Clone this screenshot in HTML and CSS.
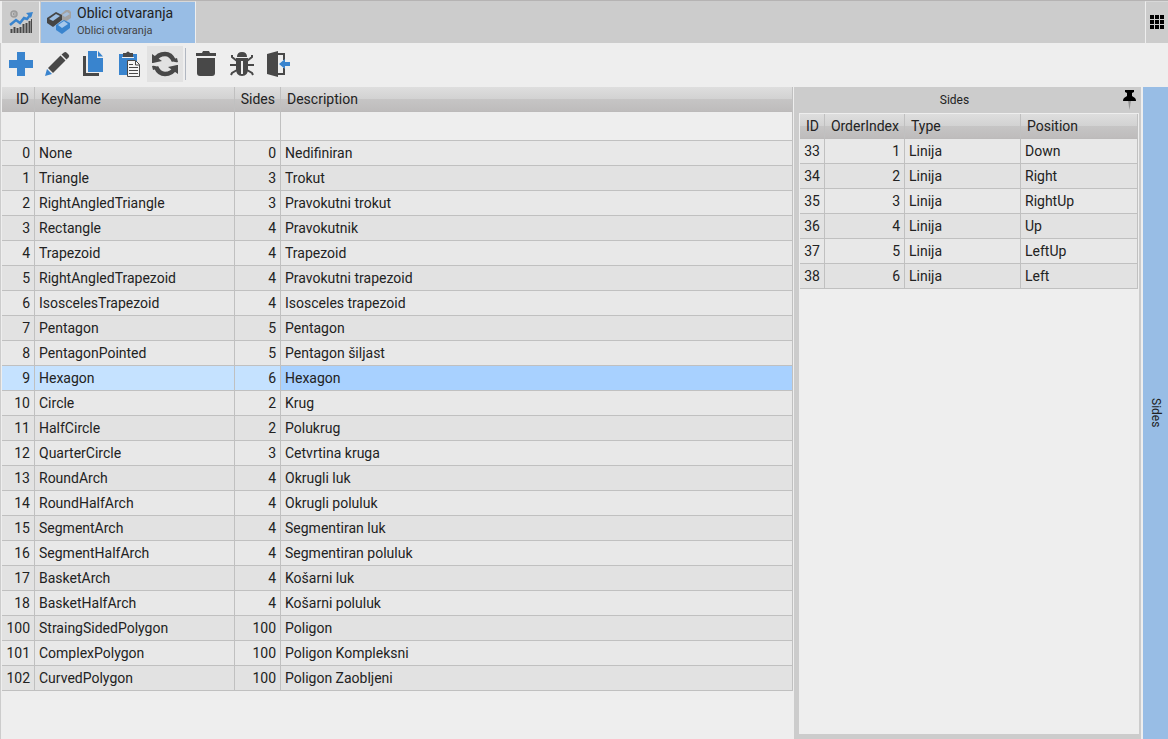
FILE: index.html
```html
<!DOCTYPE html>
<html lang="hr">
<head>
<meta charset="utf-8">
<title>Oblici otvaranja</title>
<link rel="stylesheet" href="styles.css">
</head>
<body>
<div class="app">
  <header class="tabs">
    <button class="tab-home" aria-label="Početna">
      <svg width="24" height="24" viewBox="0 0 24 24"><circle cx="5" cy="4" r="3" fill="#c4c4c4" stroke="#9a9a9a" stroke-width="1.500"/><path d="M7 3H4.500v2H7" fill="none" stroke="#999"/><path d="M2.500 19v4M5.500 17v6M8.500 18v5M11.500 17v6M14.500 14v9M17.500 13v10M20.500 11v12" stroke="#484848" stroke-width="2"/><path d="M22 9h1v14h-1z" fill="#484848"/><path d="M1 15l6-5 4 3 4-5 3 1 4-5" fill="none" stroke="#3984ce" stroke-width="2.500"/><path d="M17 3l7-1-2 6z" fill="#3984ce"/></svg>
    </button>
    <button class="tab-active">
      <svg width="24" height="24" viewBox="0 0 24 24"><path d="M14 4l5-4h3l2 2v6l-6 4-4-3z" fill="#a2a2a2"/><path d="M15 5l5-3 3 2-5 3z" fill="#a5bedb"/><path d="M0 8l9-6 6 3v5l-9 7-6-4z" fill="#454545"/><path d="M2 9l7-5 4 2-7 5z" fill="#9bbde2"/><path d="M9 15l8-5 6 3v5l-8 6-6-4z" fill="#3984ce"/><path d="M11 15l6-4 4 3-6 4z" fill="#a5c8ec"/></svg>
      <span class="tab-text"><span class="tab-title">Oblici otvaranja</span><span class="tab-sub">Oblici otvaranja</span></span>
    </button>
    <button class="apps" aria-label="Aplikacije">
      <svg width="14" height="14" viewBox="0 0 14 14"><path d="M0 0h4v4H0zM5 0h4v4H5zM10 0h4v4h-4zM0 5h4v4H0zM5 5h4v4H5zM10 5h4v4h-4zM0 10h4v4H0zM5 10h4v4H5zM10 10h4v4h-4z"/></svg>
    </button>
  </header>

  <div class="toolbar" role="toolbar" aria-label="Alati">
    <button aria-label="Dodaj"><svg width="26" height="26" viewBox="0 0 26 26"><path d="M9 1h8v8h8v8h-8v8H9v-8H1V9h8z" fill="#3984ce"/></svg></button>
    <button aria-label="Uredi"><svg width="26" height="26" viewBox="0 0 26 26"><path d="M20 1.500q1.500-1 3 .5l1.500 1.500q1.500 1.500 0 3l-2 2-5-5z" fill="#484848"/><path d="M16.500 4.500l5 5L9 22l-5-5z" fill="#484848"/><path d="M3 18l5 5-7 2z" fill="#3984ce"/></svg></button>
    <button aria-label="Kopiraj"><svg width="26" height="26" viewBox="0 0 26 26"><path d="M3 5h3v17h13v3H3z" fill="#484848"/><path d="M8 0h9v7h6v14H8z" fill="#3984ce"/><path d="M18 0l5 5.500h-5z" fill="#3984ce"/></svg></button>
    <button aria-label="Zalijepi"><svg width="26" height="26" viewBox="0 0 26 26"><path d="M3 3h18v21H3z" fill="#3984ce"/><path d="M7 2h3q2-3 4 0h3v4H7z" fill="#484848"/><path d="M6 6h12v1H6z" fill="#eee"/><path d="M11.500 9.500h8l4 4v12h-12z" fill="#f4f4f4" stroke="#484848"/><path d="M19.500 10v4h4M13 13.500h4M13 16.500h9M13 19.500h9M13 22.500h9" fill="none" stroke="#484848"/></svg></button>
    <button class="pressed" aria-label="Osvježi"><svg width="26" height="26" viewBox="0 0 26 26"><path d="M3 9Q6 3 13 3q6 0 9 7M23 17q-3 6-10 6-6 0-9-7" fill="none" stroke="#484848" stroke-width="4.500"/><path d="M0 3v9h1l9-2zM26 23v-9h-1l-9 2z" fill="#484848"/><path d="M19 9l6-2 1 4q-3 1-7-2zM7 17l-6 2-1-4q3-1 7 2z" fill="#484848"/></svg></button>
    <span class="divider"></span>
    <button aria-label="Obriši"><svg width="26" height="26" viewBox="0 0 26 26"><path d="M3 2h6l1-2h6l1 2h6v3H3z" fill="#484848"/><path d="M4 7h18v15q0 3-3 3H7q-3 0-3-3z" fill="#484848"/></svg></button>
    <button aria-label="Greške"><svg width="26" height="26" viewBox="0 0 26 26"><path d="M8 6q0-5 5-5t5 5z" fill="#484848"/><path d="M3 4v2l5 4M23 4v2l-5 4M1 14h7M25 14h-7M2 24l1-2 5-3M24 24l-1-2-5-3" fill="none" stroke="#484848" stroke-width="2"/><path d="M7 7h12v11q0 7-6 7t-6-7z" fill="#484848"/><path d="M13 10v13" stroke="#eee" stroke-width="2"/></svg></button>
    <button aria-label="Izlaz"><svg width="26" height="26" viewBox="0 0 26 26"><path d="M2 3l11-3v26L2 23z" fill="#484848"/><path d="M13 3h6v6M19 17v6h-6" fill="none" stroke="#484848" stroke-width="2"/><path d="M14 13l6-5v3h5v4h-5v3z" fill="#3984ce"/></svg></button>
  </div>

  <div class="workspace">
    <main class="main-pane">
      <table class="grid shapes">
        <colgroup><col class="c-id"><col class="c-key"><col class="c-sides"><col></colgroup>
        <thead>
          <tr><th class="num">ID</th><th>KeyName</th><th class="num">Sides</th><th>Description</th></tr>
          <tr class="filter"><td><input aria-label="Filter ID"></td><td><input aria-label="Filter KeyName"></td><td><input aria-label="Filter Sides"></td><td><input aria-label="Filter Description"></td></tr>
        </thead>
        <tbody>
          <tr><td class="num">0</td><td>None</td><td class="num">0</td><td>Nedifiniran</td></tr>
          <tr><td class="num">1</td><td>Triangle</td><td class="num">3</td><td>Trokut</td></tr>
          <tr><td class="num">2</td><td>RightAngledTriangle</td><td class="num">3</td><td>Pravokutni trokut</td></tr>
          <tr><td class="num">3</td><td>Rectangle</td><td class="num">4</td><td>Pravokutnik</td></tr>
          <tr><td class="num">4</td><td>Trapezoid</td><td class="num">4</td><td>Trapezoid</td></tr>
          <tr><td class="num">5</td><td>RightAngledTrapezoid</td><td class="num">4</td><td>Pravokutni trapezoid</td></tr>
          <tr><td class="num">6</td><td>IsoscelesTrapezoid</td><td class="num">4</td><td>Isosceles trapezoid</td></tr>
          <tr><td class="num">7</td><td>Pentagon</td><td class="num">5</td><td>Pentagon</td></tr>
          <tr><td class="num">8</td><td>PentagonPointed</td><td class="num">5</td><td>Pentagon šiljast</td></tr>
          <tr class="selected"><td class="num">9</td><td>Hexagon</td><td class="num">6</td><td class="focused">Hexagon</td></tr>
          <tr><td class="num">10</td><td>Circle</td><td class="num">2</td><td>Krug</td></tr>
          <tr><td class="num">11</td><td>HalfCircle</td><td class="num">2</td><td>Polukrug</td></tr>
          <tr><td class="num">12</td><td>QuarterCircle</td><td class="num">3</td><td>Cetvrtina kruga</td></tr>
          <tr><td class="num">13</td><td>RoundArch</td><td class="num">4</td><td>Okrugli luk</td></tr>
          <tr><td class="num">14</td><td>RoundHalfArch</td><td class="num">4</td><td>Okrugli poluluk</td></tr>
          <tr><td class="num">15</td><td>SegmentArch</td><td class="num">4</td><td>Segmentiran luk</td></tr>
          <tr><td class="num">16</td><td>SegmentHalfArch</td><td class="num">4</td><td>Segmentiran poluluk</td></tr>
          <tr><td class="num">17</td><td>BasketArch</td><td class="num">4</td><td>Košarni luk</td></tr>
          <tr><td class="num">18</td><td>BasketHalfArch</td><td class="num">4</td><td>Košarni poluluk</td></tr>
          <tr><td class="num">100</td><td>StraingSidedPolygon</td><td class="num">100</td><td>Poligon</td></tr>
          <tr><td class="num">101</td><td>ComplexPolygon</td><td class="num">100</td><td>Poligon Kompleksni</td></tr>
          <tr><td class="num">102</td><td>CurvedPolygon</td><td class="num">100</td><td>Poligon Zaobljeni</td></tr>
        </tbody>
      </table>
    </main>

    <aside class="side-pane">
      <div class="side-head">
        <h2>Sides</h2>
        <button class="pin" aria-label="Prikvači"><svg width="14" height="20" viewBox="0 0 14 20"><path d="M6 10h3l-1.500 10z" fill="#929292"/><path d="M3 0h9v2l-2 1v3l3 2q1 1 1 3H1q0-2 1-3l3-2V3L3 2z"/></svg></button>
      </div>
      <div class="side-body">
        <table class="grid">
          <colgroup><col class="s-id"><col class="s-order"><col class="s-type"><col></colgroup>
          <thead><tr><th class="num">ID</th><th class="num">OrderIndex</th><th>Type</th><th>Position</th></tr></thead>
          <tbody>
            <tr><td class="num">33</td><td class="num">1</td><td>Linija</td><td>Down</td></tr>
            <tr><td class="num">34</td><td class="num">2</td><td>Linija</td><td>Right</td></tr>
            <tr><td class="num">35</td><td class="num">3</td><td>Linija</td><td>RightUp</td></tr>
            <tr><td class="num">36</td><td class="num">4</td><td>Linija</td><td>Up</td></tr>
            <tr><td class="num">37</td><td class="num">5</td><td>Linija</td><td>LeftUp</td></tr>
            <tr><td class="num">38</td><td class="num">6</td><td>Linija</td><td>Left</td></tr>
          </tbody>
        </table>
      </div>
    </aside>

    <button class="rail">Sides</button>
  </div>
</div>
</body>
</html>
```
FILE: styles.css
```css
* { box-sizing: border-box; }

body {
  margin: 0;
  background: #eeeeee;
  color: #222222;
  font-family: Roboto, "Liberation Sans", sans-serif;
  font-size: 14px;
}

button {
  margin: 0;
  padding: 0;
  border: 0;
  background: none;
  color: inherit;
  font: inherit;
}

svg { display: block; }

.app {
  display: flex;
  flex-direction: column;
  min-height: 100vh;
}

.tabs {
  display: flex;
  gap: 1px;
  height: 43px;
  padding-left: 2px;
  border-top: 1px solid #b5b3b3;
  background: linear-gradient(90deg, #eeeeee 2px, #cccccc 2px);
}

.tab-home,
.tab-active,
.apps {
  display: flex;
  align-items: center;
  padding-bottom: 2px;
  border-top: 1px solid #d8d8d8;
}

.tab-home {
  justify-content: center;
  width: 38px;
  border-right: 1px solid #eeeeee;
}

.tab-active {
  gap: 6px;
  width: 155px;
  padding-left: 6px;
  border-right: 1px solid #eeeeee;
  background: #98bde5;
  text-align: left;
}

.tab-text {
  display: flex;
  flex-direction: column;
}

.tab-title { line-height: 18px; }

.tab-sub {
  color: #444444;
  font-size: 11px;
  line-height: 18px;
}

.apps {
  justify-content: center;
  width: 23px;
  margin-left: auto;
  border-left: 1px solid #eeeeee;
}

.toolbar {
  display: flex;
  align-items: center;
  height: 44px;
  padding: 0 2px 2px;
  border-left: 1px solid #cccccc;
}

.toolbar button {
  display: flex;
  align-items: center;
  justify-content: center;
  width: 36px;
  height: 36px;
}

.toolbar .pressed { background: #e2e2e2; }

.divider {
  width: 1px;
  height: 32px;
  margin: 0 2px;
  background: #b1b7c1;
}

.workspace {
  display: flex;
  flex: 1;
}

.main-pane {
  flex: 1;
  padding: 0 1px;
  border-left: 1px solid #cccccc;
}

.grid {
  width: 100%;
  border-collapse: separate;
  border-spacing: 0;
  table-layout: fixed;
}

.grid th {
  height: 25px;
  padding: 0 6px;
  border-right: 1px solid #c0c0c0;
  border-bottom: 1px solid #bcbaba;
  background: linear-gradient(#dedede, #d2d2d2 50%, #c6c5c5 50%, #bebcbc);
  font-weight: 400;
  text-align: left;
  line-height: 22px;
}

.grid td {
  height: 25px;
  padding: 0 4px;
  border-right: 1px solid #c0c0c0;
  border-bottom: 1px solid #c0c0c0;
  background: #e8e8e8;
  line-height: 20px;
}

.grid .num { text-align: right; }
.grid th.num { padding: 0 5px; }
.grid tbody tr:nth-child(even) td { background: #e2e2e2; }
.grid tbody .selected:nth-child(even) td { background: #c5e2ff; }
.grid tbody .selected:nth-child(even) .focused { background: #a8d1ff; }

.grid .filter td {
  height: 29px;
  padding: 0;
  background: #eeeeee;
}

.filter input {
  display: block;
  width: 100%;
  height: 28px;
  padding: 0 4px;
  border: 0;
  background: none;
  font: inherit;
}

.c-id { width: 33px; }
.c-key { width: 200px; }
.c-sides { width: 46px; }
.s-id { width: 25px; }
.s-order { width: 80px; }
.s-type { width: 116px; }

.side-pane {
  display: flex;
  flex-direction: column;
  width: 348px;
  padding: 0 2px 5px 5px;
  background: #cccccc;
  border-right: 1px solid #eeeeee;
}

.side-head {
  display: grid;
  grid-template-columns: 1fr 14px;
  align-items: center;
  height: 26px;
  padding-right: 3px;
}

.side-head h2 {
  grid-area: 1 / 1 / 2 / 3;
  margin: 0;
  padding-right: 26px;
  font-size: 12px;
  font-weight: 400;
  text-align: center;
}

.pin { grid-area: 1 / 2; }

.side-body {
  flex: 1;
  padding: 1px;
  background: #eeeeee;
}

.rail {
  display: flex;
  align-items: center;
  justify-content: center;
  width: 25px;
  margin-left: 1px;
  background: #98bde5;
  font-size: 12px;
  writing-mode: vertical-rl;
}
```
